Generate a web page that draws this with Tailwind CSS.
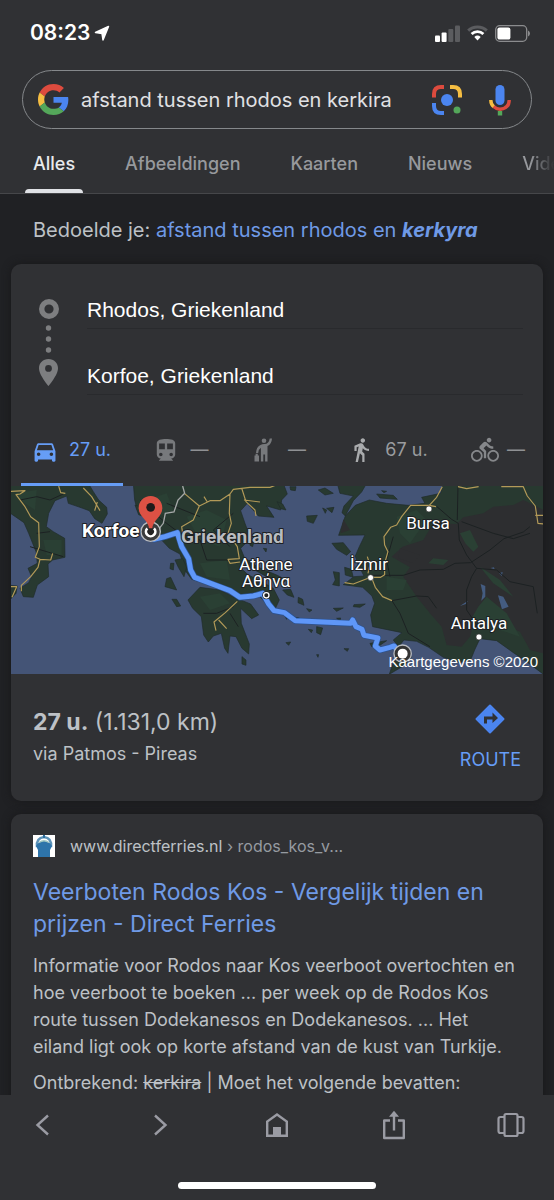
<!DOCTYPE html>
<html lang="nl">
<head>
  <meta charset="UTF-8" />
  <meta name="viewport" content="width=device-width, initial-scale=1.0" />
  <title>afstand tussen rhodos en kerkira - Google Zoeken</title>
  <script src="https://cdn.jsdelivr.net/npm/@tailwindcss/browser@4"></script>
</head>
<body class="flex flex-col h-screen overflow-hidden bg-[#202124] text-[#bdc1c6] font-['Inter','Liberation_Sans',sans-serif]">

  <!-- Header -->
  <header class="shrink-0 bg-[#303134] border-b border-[#46474a]">
    <!-- Status bar -->
    <div class="flex items-center justify-between h-[70px] pl-[30px] pr-6 pb-1">
      <div class="flex items-center gap-1 text-white">
        <span class="text-[21px] font-semibold">08:23</span>
        <svg class="w-4 h-4" viewBox="0 0 16 16" fill="currentColor"><path d="M14.500 1.500 L9 15 L8 8.500 L1.500 7.500 Z" stroke="currentColor" stroke-linejoin="round" stroke-width="1.500" /></svg>
      </div>
      <div class="flex items-center gap-[7px]">
        <svg class="w-[25px] h-[17px]" viewBox="0 0 25 17">
          <rect x="0" y="10.5" width="5" height="6.5" rx="1" fill="#fff" />
          <rect x="6.6" y="7.5" width="5" height="9.5" rx="1" fill="#fff" />
          <rect x="13.3" y="4" width="5" height="13" rx="1" fill="#5b5c5f" />
          <rect x="20" y="0.5" width="5" height="16.5" rx="1" fill="#5b5c5f" />
        </svg>
        <svg class="w-[21px] h-4" viewBox="0 0 21 16" fill="none">
          <path d="M1.2 5.6 A13.5 13.5 0 0 1 19.8 5.6" stroke="#5b5c5f" stroke-width="3" />
          <path d="M4.6 9 A8.6 8.6 0 0 1 16.4 9" stroke="#fff" stroke-width="2.8" />
          <path d="M7.3 12 A4.8 4.8 0 0 1 13.7 12 L10.5 15.6 Z" fill="#fff" />
        </svg>
        <svg class="w-[35px] h-[17px]" viewBox="0 0 35 17">
          <rect x="0.7" y="0.7" width="31" height="15.6" rx="4" fill="none" stroke="#8b8c8e" stroke-width="1.3" />
          <rect x="2.4" y="2.4" width="13" height="12.2" rx="2.2" fill="#fff" />
          <path d="M33 5.5 Q35 6.5 35 8.5 Q35 10.5 33 11.5 Z" fill="#8b8c8e" />
        </svg>
      </div>
    </div>

    <!-- Search box -->
    <form class="flex items-center h-[59px] mx-[22px] pl-[15px] pr-5 border border-[#85888b] rounded-full" onsubmit="return false">
      <svg class="shrink-0 w-[31px] h-[31px]" viewBox="0 0 48 48">
        <path fill="#dd4b3e" d="M24 9.5c3.5 0 6.7 1.2 9.2 3.6l6.9-6.9C35.9 2.4 30.5 0 24 0 14.6 0 6.5 5.4 2.6 13.2l8 6.2C12.4 13.7 17.7 9.5 24 9.5z" />
        <path fill="#4b85f0" d="M47 24.6c0-1.6-.2-3.1-.4-4.6H24v9h12.900c-.6 3-2.200 5.500-4.700 7.200l7.700 6C44.400 38 47 31.800 47 24.600z" />
        <path fill="#f5bd42" d="M10.500 28.600c-.5-1.500-.8-3-.8-4.600s.3-3.100.8-4.600l-8-6.200C.9 16.500 0 20.100 0 24s.9 7.500 2.600 10.800z" />
        <path fill="#54a75a" d="M24 48c6.500 0 11.900-2.100 15.900-5.800l-7.700-6c-2.200 1.500-4.900 2.300-8.200 2.300-6.300 0-11.600-4.200-13.500-9.900l-8 6.200C6.500 42.600 14.600 48 24 48z" />
      </svg>
      <input type="search" aria-label="Zoeken" value="afstand tussen rhodos en kerkira" class="grow min-w-0 ml-3 text-[20px] text-[#e0e1e4] bg-transparent outline-none appearance-none" />
      <button type="button" aria-label="Zoeken met camera" class="shrink-0 ml-4">
        <svg class="w-[30px] h-[30px]" viewBox="0 0 30 30" fill="none" stroke-width="4">
          <path d="M2 12.500 V9 Q2 2 9 2 H12" stroke="#dd4b3e" />
          <path d="M18 2 H21 Q28 2 28 9 V12.500" stroke="#f5bd42" />
          <path d="M2 18 V21 Q2 28 9 28 H12" stroke="#4b85f0" />
          <circle cx="15" cy="15" r="6" fill="#4b85f0" />
          <circle cx="25" cy="25" r="3.500" fill="#54a75a" />
        </svg>
      </button>
      <button type="button" aria-label="Gesproken zoekopdracht" class="shrink-0 ml-[27px]">
        <svg class="w-[22px] h-8" viewBox="0 0 22 32" fill="none">
          <rect x="6.500" y="1" width="9" height="20" rx="4.500" fill="#4b85f0" />
          <path d="M1.800 16 Q1.800 20.500 5 23" stroke="#f5bd42" stroke-width="3.400" />
          <path d="M4.600 22.600 Q7.500 25.300 11 25.300 Q20.200 24.500 20.200 16" stroke="#dd4b3e" stroke-width="3.400" />
          <rect x="8.800" y="27" width="4.400" height="4.500" fill="#54a75a" />
        </svg>
      </button>
    </form>

    <!-- Tabs -->
    <nav class="flex gap-[34px] h-16 pl-[25px] overflow-hidden whitespace-nowrap text-[18px] font-medium text-[#97999d]">
      <a href="#" class="shrink-0 px-2 pt-[21px] leading-7 text-[#e8eaed] relative">Alles<span class="absolute inset-x-0 bottom-0 h-1 rounded-t bg-[#dfe1e5]"></span></a>
      <a href="#" class="shrink-0 px-2 pt-[21px] leading-7">Afbeeldingen</a>
      <a href="#" class="shrink-0 px-2 pt-[21px] leading-7">Kaarten</a>
      <a href="#" class="shrink-0 px-2 pt-[21px] leading-7">Nieuws</a>
      <a href="#" class="shrink-0 px-2 pt-[21px] leading-7 bg-linear-to-r from-[#97999d] from-20% to-[#303134] to-50% bg-clip-text text-transparent">Video's</a>
    </nav>
  </header>

  <main class="grow min-h-0 overflow-y-auto [scrollbar-width:none] px-[11px]">
    <p class="px-[22px] pt-[22px] pb-5 text-[20px] leading-7 whitespace-nowrap">Bedoelde je: <a href="#" class="text-[#6f9ae6]">afstand tussen rhodos en <b class="italic">kerkyra</b></a></p>

    <!-- Directions card -->
    <section class="rounded-[10px] bg-[#303134] shadow-[0_0_8px_#18181a]">
      <div class="flex pt-7 pl-7 pr-5">
        <svg class="shrink-0 w-5 h-[94px] mt-[6px]" viewBox="0 0 20 94" fill="#7d7e80">
          <circle cx="10" cy="11" r="7.300" fill="none" stroke="#7d7e80" stroke-width="5.400" />
          <circle cx="9.500" cy="30" r="2.700" />
          <circle cx="9.500" cy="41" r="2.700" />
          <circle cx="9.500" cy="52" r="2.700" />
          <path fill-rule="evenodd" d="M9.500 61 C4 61 0 65 0 70.200 C0 77 9.500 88 9.500 88 S19 77 19 70.200 C19 65 15 61 9.500 61 Z M9.500 67 a3.400 3.400 0 1 1 0 6.800 a3.400 3.400 0 1 1 0 -6.800 Z" />
        </svg>
        <div class="grow min-w-0 ml-7 text-[21px] text-white font-['Liberation_Sans',Arial,sans-serif]">
          <input type="text" aria-label="Vertrekpunt" value="Rhodos, Griekenland" class="block w-full h-[37px] pb-px border-b border-[#292a2d] outline-none" />
          <input type="text" aria-label="Bestemming" value="Korfoe, Griekenland" class="block w-full h-[37px] mt-[29px] pb-px border-b border-[#292a2d] outline-none" />
        </div>
      </div>

      <!-- Travel modes -->
      <div class="flex justify-between mt-[25px] pl-[10px] pr-[6px] text-[18px] text-[#8f9194]">
        <button class="flex items-center gap-3 h-[66px] px-3 pb-1 border-b-[3px] border-[#669df6] text-[#669df6]">
          <svg class="w-6 h-6" viewBox="0 0 24 24" fill="currentColor"><path transform="translate(-1.900 -.6) scale(1.160)" d="M18.920 6.010C18.720 5.420 18.160 5 17.500 5h-11c-.66 0-1.210.42-1.420 1.010L3 12v8c0 .55.45 1 1 1h1c.55 0 1-.45 1-1v-1h12v1c0 .55.45 1 1 1h1c.55 0 1-.45 1-1v-8l-2.080-5.990zM6.500 16c-.83 0-1.500-.67-1.500-1.500S5.670 13 6.500 13s1.500.67 1.500 1.500S7.330 16 6.500 16zm11 0c-.83 0-1.500-.67-1.500-1.500s.67-1.500 1.500-1.500 1.500.67 1.500 1.500-.67 1.500-1.500 1.500zM5 11l1.500-4.500h11L19 11H5z" /></svg>
          27 u.
        </button>
        <button class="flex items-center gap-3 h-[66px] px-3 pb-[7px]" aria-label="Openbaar vervoer">
          <svg class="w-6 h-6" viewBox="0 0 24 24" fill="#77797c"><path transform="translate(-1.800 -1.400) scale(1.150)" d="M12 2c-4 0-8 .5-8 4v9.500C4 17.430 5.570 19 7.500 19L6 20.500v.5h12v-.5L16.500 19c1.930 0 3.500-1.570 3.500-3.500V6c0-3.500-3.580-4-8-4zM7.500 17c-.83 0-1.500-.67-1.500-1.500S6.670 14 7.500 14s1.500.67 1.500 1.500S8.330 17 7.500 17zm3.500-6H6V6h5v5zm5.500 6c-.83 0-1.500-.67-1.500-1.500s.67-1.500 1.500-1.500 1.500.67 1.500 1.500-.67 1.500-1.500 1.500zm1.500-6h-5V6h5v5z" /></svg>
          —
        </button>
        <button class="flex items-center gap-3 h-[66px] px-3 pb-[7px]" aria-label="Taxi">
          <svg class="w-6 h-6" viewBox="0 0 24 24" fill="#77797c">
            <circle cx="12" cy="2.800" r="2.300" />
            <path d="M17.700 .5 H20 Q19.600 6.300 15.500 8 V23.500 H13.100 V16.500 H11.300 V23.500 H8.900 V9.800 Q6.500 11.200 6.200 15 H4 Q4.200 9 8.500 6.900 Q10 6.100 12.500 6.100 Q17 5.800 17.700 .5 Z" />
            <path d="M2.500 17.500 H3.600 V15.800 H5.800 V17.500 H7 V23.500 H2.500 Z" />
          </svg>
          —
        </button>
        <button class="flex items-center gap-3 h-[66px] px-3 pb-[7px] text-[#9a9c9f]">
          <svg class="w-6 h-6" viewBox="0 0 24 24" fill="#a9abad"><path transform="translate(-1.300 -1.500) scale(1.120)" d="M13.500 5.500c1.100 0 2-.9 2-2s-.9-2-2-2-2 .9-2 2 .9 2 2 2zM9.800 8.900L7 23h2.100l1.800-8 2.100 2v6h2v-7.500l-2.100-2 .6-3C14.800 12 16.800 13 19 13v-2c-1.900 0-3.500-1-4.300-2.400l-1-1.600c-.4-.6-1-1-1.700-1-.3 0-.5.1-.8.1L6 8.300V13h2V9.600l1.800-.7" /></svg>
          67 u.
        </button>
        <button class="flex items-center gap-2 h-[66px] px-3 pb-[7px]" aria-label="Fiets">
          <svg class="w-7 h-7" viewBox="0 0 24 24" fill="#85878a"><path d="M15.500 5.500c1.100 0 2-.9 2-2s-.9-2-2-2-2 .9-2 2 .9 2 2 2zM5 12c-2.800 0-5 2.200-5 5s2.200 5 5 5 5-2.200 5-5-2.200-5-5-5zm0 8.500c-1.900 0-3.500-1.600-3.500-3.500s1.600-3.500 3.500-3.500 3.500 1.600 3.500 3.500-1.600 3.500-3.500 3.500zm5.800-10l2.400-2.400.8.800c1.300 1.300 3 2.100 5.100 2.100V9c-1.500 0-2.700-.6-3.600-1.500l-1.900-1.900c-.5-.4-1-.6-1.600-.6s-1.100.2-1.400.6L7.800 8.400c-.4.4-.6.9-.6 1.400 0 .6.200 1.100.6 1.400L11 14v5h2v-6.200l-2.200-2.300zM19 12c-2.800 0-5 2.200-5 5s2.200 5 5 5 5-2.200 5-5-2.200-5-5-5zm0 8.500c-1.900 0-3.500-1.600-3.500-3.500s1.600-3.500 3.500-3.500 3.500 1.600 3.500 3.500-1.600 3.500-3.500 3.500z" /></svg>
          —
        </button>
      </div>

      <!-- Map -->
      <svg class="block w-full" viewBox="0 0 532 188" role="img" aria-label="Routekaart van Rhodos naar Korfoe">
        <rect width="532" height="188" fill="#445476" />
        <g transform="scale(.3333) translate(-33 -18)">
          <!-- Land -->
          <g fill="#283930" stroke="#202c2a" stroke-width="2" stroke-linejoin="round">
            <path d="M20 10H265L280 35L296 60L320 82L322 102L306 130L284 116L268 92L240 82L205 70L200 48L165 62L146 100L139 140L160 155L194 175L195 232L158 240L144 252L146 290L112 315L100 352L70 350L60 325L86 308L95 290L84 265L112 250L108 215L86 160L72 128L20 92Z" />
            <path d="M20 315L52 318L48 340L20 370Z" />
            <path d="M400 10L404 60L412 90L440 120L480 175L508 205L540 222L556 272L575 298L625 312L680 330L725 350L775 345L800 372L825 388L838 360L820 325L780 302L745 285L720 262L733 232L722 205L752 175L735 130L722 92L742 70L775 108L822 112L800 78L842 90L845 60L862 42L850 10Z" />
            <path d="M564 360L600 322L660 330L712 356L752 372L776 405L755 416L722 385L724 430L748 492L746 522L726 505L708 470L690 468L684 520L674 505L664 460L640 468L625 486L611 465L604 410L578 385Z" />
            <path d="M738 236L775 262L830 285L860 300L850 308L800 290L750 262Z" />
            <path d="M525 240L548 236L560 262L552 290L535 262ZM512 250L522 250L520 270L510 266ZM500 296L512 292L530 330L495 320ZM516 358L530 358L542 378L530 380ZM726 530L738 540L738 556L726 552ZM405 75L420 80L432 110L416 104ZM750 180L762 184L758 200L750 196ZM790 205L800 206L798 216Z" />
            <!-- Aegean islands -->
            <path d="M831 65L848 72L858 90L842 86ZM920 108L952 106L940 130L922 124ZM870 20L888 20L886 32L872 30ZM968 84L980 90L976 100ZM955 30L975 24L1000 40L975 45ZM980 85L1002 82L996 98ZM996 190L1030 188L1052 215L1040 226L1010 208ZM1000 275L1018 278L1018 318L998 314L1006 300ZM1034 262L1054 268L1060 292L1036 285ZM848 330L872 328L882 352L862 345ZM895 352L908 358L912 376L894 368ZM850 400L866 406L860 418ZM886 412L898 414L890 424ZM920 386L936 390L928 396ZM950 440L968 444L962 464L950 458ZM925 448L938 450L934 458ZM858 488L872 486L866 496ZM950 524L956 524L954 532ZM1000 385L1030 384L1010 394ZM1062 374L1096 372L1080 382L1060 380ZM1010 415L1022 414L1020 424ZM1032 506L1046 506L1042 514ZM1110 490L1160 482L1140 496L1115 500ZM1168 583L1180 548L1212 520L1235 530L1215 555Z" />
            <!-- Turkey -->
            <path d="M1012 10H1100L1085 36L1060 62L1036 108L1026 98L1032 78L1060 48L1020 40Z" />
            <path d="M1130 42L1180 46L1192 58L1140 54ZM1145 32L1160 34L1152 38Z" />
            <path d="M1016 166L1036 108L1066 76L1108 60L1160 70L1225 76L1275 70L1265 52L1322 40L1330 10H1640V590L1580 545L1536 515L1490 482L1440 476L1424 510L1412 540L1380 548L1330 532L1286 502L1250 484L1212 480L1196 500L1180 480L1206 458L1118 440L1112 405L1124 370L1116 348L1088 322L1030 314L1062 290L1092 288L1074 252L1066 228L1078 200L1095 165Z" />
          </g>
          <!-- Dry plateau -->
          <g fill="#2d2e30">
            <path d="M1175 230L1208 200L1270 180L1300 130L1370 132L1390 112L1450 100L1480 80L1540 75L1570 60L1630 90V520L1590 510L1560 455L1500 430L1460 395L1430 400L1410 470L1385 500L1340 495L1325 440L1290 400L1250 350L1210 290L1230 262Z" />
            <path d="M1200 205L1260 225L1240 250L1195 235ZM1030 118L1050 150L1022 160Z" />
          </g>
          <g fill="#2a4034">
            <path d="M1380 160L1410 150L1435 200L1420 215L1396 190ZM1440 260L1500 300L1540 350L1480 310ZM1285 250L1330 255L1345 240L1300 235ZM1460 350L1520 400L1560 470L1500 450L1440 420L1400 440L1435 380ZM1190 110L1250 90L1280 120L1230 190L1200 160ZM1160 290L1220 300L1210 330L1160 330ZM440 60L500 40L520 90L470 110ZM560 110L620 90L680 120L660 200L600 180ZM600 250L680 240L690 300L620 290ZM45 40L110 30L105 90L75 70ZM130 180L185 180L185 225L140 225ZM600 350L660 340L690 370L630 390Z" />
          </g>
          <g fill="#445c80">
            <path d="M1442 312L1456 318L1456 350L1444 362L1448 340ZM1494 346L1510 350L1526 380L1506 388ZM1380 378L1404 362L1398 372ZM1472 264L1482 262L1484 268ZM1498 280L1508 276L1506 288Z" />
          </g>
          <!-- Minor roads -->
          <g fill="none" stroke="#1c2122" stroke-width="3">
            <path d="M1112 286L1210 286L1260 270L1330 268L1365 250L1412 248L1470 210L1512 176L1570 156L1590 140M1311 80L1355 118L1375 130L1378 180L1400 225L1430 265L1490 270L1530 305L1600 320L1612 400M1385 125L1480 160L1540 176L1590 160M1430 265L1415 290L1400 330L1400 390L1434 440M1176 362L1200 400L1225 460L1290 500M1176 362L1250 348L1285 350L1310 385M1374 20L1372 120M1180 170L1160 240L1170 290" />
            <path d="M60 60L110 50L150 60L190 42M90 200L190 230M110 160L150 155M420 60L450 90L500 130L540 160L600 180M600 180L620 240L690 240M500 70L600 110M700 100L640 150L690 200M610 400L650 400L700 380M690 400L715 440" />
          </g>
          <!-- Main roads -->
          <g fill="none" stroke="#b39a58" stroke-width="3.500" stroke-linejoin="round">
            <path d="M33 34L75 32L60 42L48 44L75 80L92 110L116 128L118 200L106 232L120 238L114 262L92 290L64 316L64 334M120 238L152 240L158 220M176 18L182 38L196 40M33 320L50 320L36 352M250 24L275 50L290 75L300 92M292 66L284 92" />
            <path d="M553 40L598 78L580 120L545 140L548 160M598 78L630 62L660 62L690 42L700 28L750 22L810 22L831 14M612 50L622 66M690 42L688 100L694 130L684 160L712 200L718 236L684 238L690 250L720 246M725 24L738 65L765 90L768 108M732 60L780 66M712 364L676 398L642 426L648 452M656 420L680 446" />
            <path d="M1327 20L1310 52L1288 76L1232 76L1205 110L1190 135L1172 142L1152 170L1154 195L1164 215L1154 250L1154 284L1142 292L1112 292L1060 312L1034 308M1102 230L1110 255L1104 280M1116 296L1126 322L1148 350L1176 362M1288 76L1308 80M1374 20L1400 26L1436 20M1504 20L1570 20L1582 48L1606 78L1614 130L1630 132M1606 106H1630" />
          </g>
          <path d="M548 18L554 40L534 60L522 96L496 100L490 130L478 145" fill="none" stroke="#a5a8a8" stroke-width="4" />
          <!-- Route -->
          <g fill="none" stroke-linejoin="round" stroke-linecap="round">
            <path d="M462 178L495 170L532 158L545 200L566 236L572 270L584 292L626 308L690 332L720 352L760 348L788 340L806 372L822 392L854 398L886 422L1052 430L1058 420L1068 440L1086 448L1092 466L1134 474L1126 498L1140 510L1170 502L1182 498L1196 514" stroke="#2b5291" stroke-width="19" />
            <path d="M462 178L495 170L532 158L545 200L566 236L572 270L584 292L626 308L690 332L720 352L760 348L788 340L806 372L822 392L854 398L886 422L1052 430L1058 420L1068 440L1086 448L1092 466L1134 474L1126 498L1140 510L1170 502L1182 498L1196 514" stroke="#5f97f8" stroke-width="15" />
          </g>
          <!-- End points -->
          <circle cx="452" cy="155" r="29" fill="#3a3b3c" stroke="#b9bcc0" stroke-width="4" />
          <path d="M452 48C432 48 416 64 416 84C416 112 446 118 448 150H456C458 118 487 112 487 84C487 64 472 48 452 48Z" fill="#dd5144" />
          <circle cx="452" cy="82" r="13" fill="#1e1a1a" />
          <path d="M442 145A14 14 0 1 0 462 145" fill="#222" stroke="#fff" stroke-width="8" />
          <circle cx="1208" cy="521" r="26" fill="#333" stroke="#b9bcc0" stroke-width="4" />
          <circle cx="1208" cy="521" r="15" fill="#fff" />
          <circle cx="799" cy="346" r="12" fill="#222" />
          <circle cx="799" cy="346" r="8" fill="#222" stroke="#fff" stroke-width="4" />
          <g fill="#fff" stroke="#333" stroke-width="2">
            <circle cx="1287" cy="87" r="9" />
            <circle cx="1112" cy="293" r="9" />
            <circle cx="1437" cy="471" r="9" />
          </g>
        </g>
        <!-- Labels -->
        <g class="font-['Roboto',sans-serif] text-[17px]" fill="#fff" stroke="#1d2023" stroke-width="2" stroke-linejoin="round" paint-order="stroke">
          <text x="71" y="51" class="text-[19px] font-bold">Korfoe</text>
          <text x="170" y="57" class="text-[19px] font-bold" fill="#b9bcc0">Griekenland</text>
          <text x="255" y="84" text-anchor="middle">Athene</text>
          <text x="255" y="101" text-anchor="middle">Αθήνα</text>
          <text x="417" y="43" text-anchor="middle">Bursa</text>
          <text x="358" y="84" text-anchor="middle">İzmir</text>
          <text x="468" y="143" text-anchor="middle">Antalya</text>
        </g>
        <text x="527" y="181" text-anchor="end" class="font-['Liberation_Sans',Arial,sans-serif] text-[15px]" fill="#fff">Kaartgegevens ©2020</text>
      </svg>

      <!-- Route summary -->
      <div class="flex justify-between px-[22px] pt-[30px] pb-[27px]">
        <div class="pt-[2px]">
          <div class="text-[23px] leading-8"><b>27 u.</b> (1.131,0 km)</div>
          <div class="text-[18px] leading-8">via Patmos - Pireas</div>
        </div>
        <a href="#" class="flex flex-col items-center text-[18px] leading-7 text-[#669df6]">
          <svg class="w-[30px] h-[30px] mb-3" viewBox="0 0 30 30">
            <path d="M15 1.500 L28.500 15 L15 28.500 L1.500 15 Z" fill="#4b85f0" stroke="#4b85f0" stroke-width="2" stroke-linejoin="round" />
            <path d="M9 19.500 V12.500 H17.500 V8.500 L23 14 L17.500 19 V15.500 H12 V19.500 Z" fill="#303134" />
          </svg>
          ROUTE
        </a>
      </div>
    </section>

    <!-- Search result -->
    <article class="mt-[13px] px-[22px] pt-5 pb-6 rounded-[10px] bg-[#303134] shadow-[0_0_8px_#18181a]">
      <div class="flex items-center gap-[15px] h-6 text-[16px] whitespace-nowrap">
        <svg class="w-[22px] h-[22px]" viewBox="0 0 22 22">
          <rect width="22" height="22" fill="#fff" />
          <path d="M4 12 Q3 3 11 2 Q19 3 18 12" fill="none" stroke="#5d93b8" stroke-width="2.500" />
          <path d="M10 0H12V3H10Z" fill="#2f6f9f" />
          <path d="M3 11 Q6 6 11 6 Q16 6 19 11 L17 15 V22 H5 V15 Z" fill="#2e74aa" />
          <path d="M6 7.500 Q11 4 16 7.500" fill="none" stroke="#9fc6c0" stroke-width="1.500" />
        </svg>
        <span>www.directferries.nl <span class="text-[#969ba1]">› rodos_kos_v...</span></span>
      </div>
      <h3 class="mt-[18px] text-[23px] leading-8 text-[#6f9ae6]"><a href="#">Veerboten Rodos Kos - Vergelijk tijden en<br />prijzen - Direct Ferries</a></h3>
      <p class="mt-3 text-[18px] leading-[27px] whitespace-nowrap">Informatie voor Rodos naar Kos veerboot overtochten en<br />hoe veerboot te boeken ... per week op de Rodos Kos<br />route tussen Dodekanesos en Dodekanesos. ... Het<br />eiland ligt ook op korte afstand van de kust van Turkije.</p>
      <p class="mt-[9px] text-[18px] leading-[27px] whitespace-nowrap">Ontbrekend: <s>kerkira</s> | Moet het volgende bevatten:</p>
    </article>
  </main>

  <!-- Browser toolbar -->
  <footer class="shrink-0 bg-[#303134] text-[#9a9ba3]">
    <div class="flex items-center justify-between h-[60px] px-7">
      <button aria-label="Vorige"><svg class="w-[30px] h-[30px]" viewBox="0 0 30 30" fill="none" stroke="currentColor" stroke-width="2.400"><path d="M20 5.500 L9.500 15 L20 24.500" /></svg></button>
      <button aria-label="Volgende"><svg class="w-[30px] h-[30px]" viewBox="0 0 30 30" fill="none" stroke="currentColor" stroke-width="2.400"><path d="M10 5.500 L20.500 15 L10 24.500" /></svg></button>
      <button aria-label="Startpagina"><svg class="w-[30px] h-[30px]" viewBox="0 0 30 30" fill="none" stroke="currentColor" stroke-width="2.400"><path d="M5.200 25.800 V11.500 L15 4.500 L24.800 11.500 V25.800 Z" /><path d="M11 17 H19 V26 H11 Z" fill="currentColor" stroke="none" /></svg></button>
      <button aria-label="Delen"><svg class="w-[30px] h-[30px]" viewBox="0 0 30 30" fill="none" stroke="currentColor" stroke-width="2.400"><path d="M11 10.500 H5.200 V28 H24.800 V10.500 H19" stroke-linejoin="round" /><path d="M15 20.500 V4" /><path d="M15 .8 L20 6.800 H10 Z" fill="currentColor" stroke="none" /></svg></button>
      <button aria-label="Tabbladen"><svg class="w-[30px] h-[30px]" viewBox="0 0 30 30" fill="none" stroke="currentColor" stroke-width="2.200" stroke-linejoin="round"><rect x="8.500" y="4" width="13" height="22" rx="1.500" /><path d="M8.500 7 H4.500 Q2.500 7 2.500 9 V21 Q2.500 23 4.500 23 H8.500 M21.500 7 H25.500 Q27.500 7 27.500 9 V21 Q27.500 23 25.500 23 H21.500" /></svg></button>
    </div>
    <div class="flex justify-center pt-[27px] pb-[11px]">
      <span class="w-[198px] h-[7px] rounded-full bg-white"></span>
    </div>
  </footer>

</body>
</html>
